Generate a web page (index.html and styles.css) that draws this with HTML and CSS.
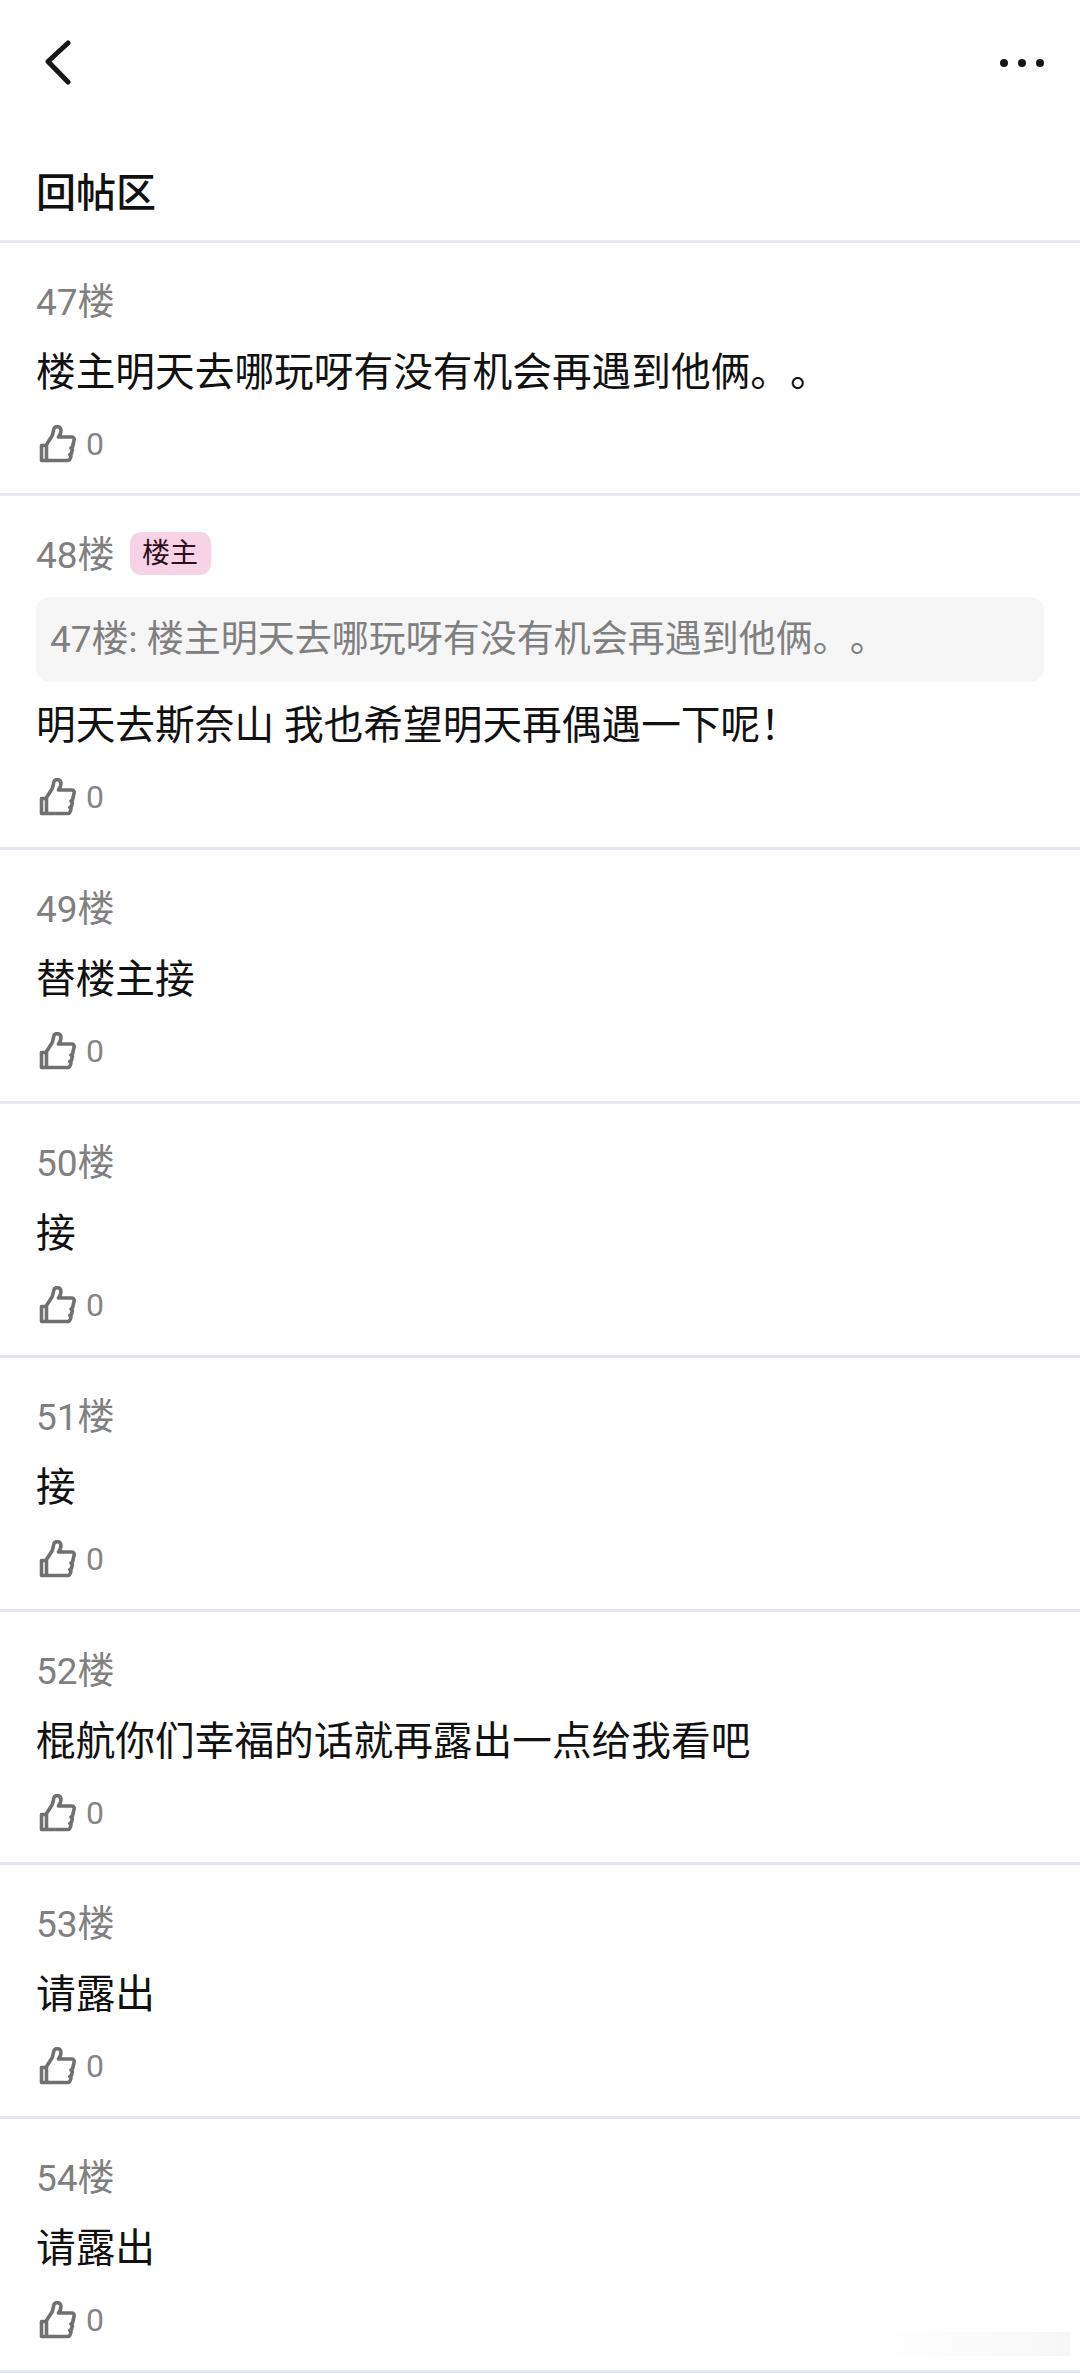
FILE: index.html
```html
<!DOCTYPE html>
<html lang="zh-CN">
<head>
<meta charset="utf-8">
<title>回帖区</title>
<link rel="stylesheet" href="styles.css">
</head>
<body>
<svg class="defs" width="0" height="0" aria-hidden="true">
  <symbol id="thumb" viewBox="0 0 38 38">
    <path d="M2.500 20.500h5v15h-5zM7.500 19.500 13 11 C14 9 14.500 5 15 3.500 C16 1 20.500 1 21.500 3.500 C22.500 6 21 10 19.500 12 H33 C35 12 35.500 14 35 15.500 L33.500 22 L32 23 L33.400 24.500 L32.400 28.500 L30.800 29.500 L32 31 C31.500 33 31 35.500 29 35.500 H7.500" fill="none" stroke="currentColor" stroke-width="3.600" stroke-linejoin="round" stroke-linecap="round"/>
  </symbol>
</svg>
<header class="nav">
  <svg class="back" viewBox="0 0 28 46" aria-label="返回"><path d="M24 3 4 21.500 24 42" fill="none" stroke="#161616" stroke-width="5" stroke-linecap="round" stroke-linejoin="round"/></svg>
  <div class="more" aria-label="更多"><i></i><i></i><i></i></div>
</header>
<h1 class="title">回帖区</h1>
<main class="list">
  <article class="post">
    <div class="floor"><span>47楼</span></div>
    <p class="body">楼主明天去哪玩呀有没有机会再遇到他俩。。</p>
    <div class="like"><svg class="thumb"><use href="#thumb"/></svg><span>0</span></div>
  </article>
  <article class="post post-reply">
    <div class="floor"><span>48楼</span><b class="badge">楼主</b></div>
    <p class="quote">47楼: 楼主明天去哪玩呀有没有机会再遇到他俩。。</p>
    <p class="body">明天去斯奈山 我也希望明天再偶遇一下呢！</p>
    <div class="like"><svg class="thumb"><use href="#thumb"/></svg><span>0</span></div>
  </article>
  <article class="post">
    <div class="floor"><span>49楼</span></div>
    <p class="body">替楼主接</p>
    <div class="like"><svg class="thumb"><use href="#thumb"/></svg><span>0</span></div>
  </article>
  <article class="post">
    <div class="floor"><span>50楼</span></div>
    <p class="body">接</p>
    <div class="like"><svg class="thumb"><use href="#thumb"/></svg><span>0</span></div>
  </article>
  <article class="post">
    <div class="floor"><span>51楼</span></div>
    <p class="body">接</p>
    <div class="like"><svg class="thumb"><use href="#thumb"/></svg><span>0</span></div>
  </article>
  <article class="post">
    <div class="floor"><span>52楼</span></div>
    <p class="body">棍航你们幸福的话就再露出一点给我看吧</p>
    <div class="like"><svg class="thumb"><use href="#thumb"/></svg><span>0</span></div>
  </article>
  <article class="post">
    <div class="floor"><span>53楼</span></div>
    <p class="body">请露出</p>
    <div class="like"><svg class="thumb"><use href="#thumb"/></svg><span>0</span></div>
  </article>
  <article class="post">
    <div class="floor"><span>54楼</span></div>
    <p class="body">请露出</p>
    <div class="like"><svg class="thumb"><use href="#thumb"/></svg><span>0</span></div>
  </article>
</main>
<div class="smudge"></div>
</body>
</html>
```
FILE: styles.css
```css
* { box-sizing: border-box; }
html, body { margin: 0; padding: 0; background: #fff; }
body {
  position: relative;
  width: 1080px;
  height: 2374px;
  overflow: hidden;
  font-family: "Roboto", "Noto Sans CJK SC", sans-serif;
  color: #111;
  text-spacing-trim: space-all;
}
.defs { position: absolute; }
.nav {
  height: 126px;
  padding: 40px 36px 0 44px;
  display: flex;
  justify-content: space-between;
  align-items: flex-start;
}
.back { width: 28px; height: 46px; }
.more { display: flex; gap: 10px; margin-top: 19px; }
.more i { width: 8px; height: 8px; border-radius: 50%; background: #161616; }
.title {
  margin: 0;
  height: 116.5px;
  padding: 39px 0 0 36px;
  font-size: 40px;
  line-height: 58px;
  font-weight: 500;
  border-bottom: 3px solid #e5e7f0;
}
.post {
  height: 253.8px;
  padding: 31px 36px 0;
  border-bottom: 3px solid #e5e7f0;
}
.post-reply { height: 354px; }
.floor {
  display: flex;
  align-items: center;
  height: 50px;
  font-size: 37px;
  color: #808080;
}
.badge {
  margin: 3px 0 0 15px;
  width: 81px;
  height: 43px;
  border-radius: 11px;
  background: #f8d3e6;
  color: #2c1020;
  font-size: 28px;
  font-weight: 400;
  line-height: 43px;
  text-align: center;
}
.body {
  margin: 19px 0 0;
  height: 60px;
  font-size: 39.7px;
  line-height: 60px;
}
.quote {
  margin: 20px 0 0;
  height: 85px;
  padding: 0 14px;
  border-radius: 14px;
  background: #f6f6f6;
  color: #808080;
  font-size: 37px;
  line-height: 85px;
}
.quote + .body { margin-top: 14px; }
.like {
  display: flex;
  align-items: center;
  gap: 9px;
  margin-top: 20px;
  height: 42px;
  padding-left: 3px;
}
.thumb { width: 38px; height: 38px; color: #707070; }
.like span { font-size: 32px; line-height: 42px; color: #858585; }
.smudge {
  position: absolute;
  right: 10px;
  bottom: 18px;
  width: 200px;
  height: 24px;
  background: linear-gradient(90deg, rgba(250, 250, 250, 0), #fafafa 60%, #f7f7f7);
}
```
